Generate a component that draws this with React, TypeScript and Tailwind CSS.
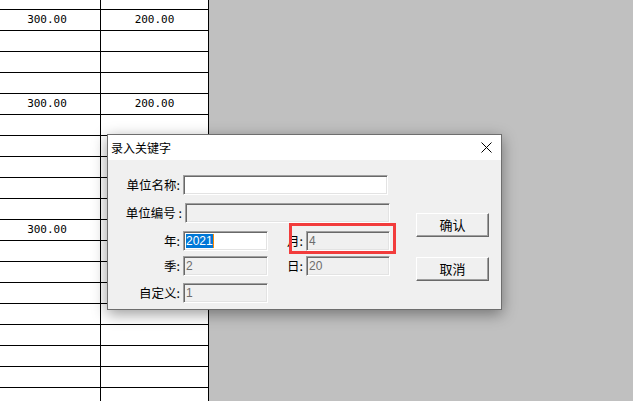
import type { ReactNode } from 'react'

const cjk = "font-['Noto_Sans_CJK_SC','Microsoft_YaHei',sans-serif]"

const rows: [string, string][] = Array.from({ length: 19 }, (_, i) => {
  if (i === 0 || i === 4) return ['300.00', '200.00']
  if (i === 10) return ['300.00', '']
  return ['', '']
})

function Field({
  value,
  width,
  disabled,
  selected,
}: {
  value: string
  width: string
  disabled?: boolean
  selected?: boolean
}) {
  return (
    <div
      className={`${width} h-[20px] flex items-center pl-[2px] border border-t-[#a0a0a0] border-l-[#a0a0a0] border-b-white border-r-white shadow-[inset_1px_1px_0_#696969,inset_-1px_-1px_0_#e3e3e3] font-['Liberation_Sans',sans-serif] text-[12px] ${
        disabled ? 'bg-[#f0f0f0] text-[#6d6d6d]' : 'bg-white text-black'
      }`}
    >
      {selected ? (
        <>
          <span className="bg-[#0078d7] text-white leading-[14px]">{value}</span>
          <span className="w-[1px] h-[14px] bg-[#ff8a00]" />
        </>
      ) : (
        <span className="leading-[14px]">{value}</span>
      )}
    </div>
  )
}

function Label({ children, width }: { children: ReactNode; width: string }) {
  return <div className={`${width} text-right pr-[3px] ${cjk} text-[12.5px] leading-none text-black`}>{children}</div>
}

function Button({ children }: { children: ReactNode }) {
  return (
    <div
      className={`w-[73px] h-[24px] flex items-center justify-center bg-[#f0f0f0] border border-t-white border-l-white border-b-[#696969] border-r-[#696969] shadow-[inset_-1px_-1px_0_#a0a0a0] ${cjk} text-[13px] text-black`}
    >
      {children}
    </div>
  )
}

export default function App() {
  return (
    <div className="relative w-[633px] h-[401px] overflow-hidden bg-[#c0c0c0] flex">
      {/* sheet */}
      <div className="w-[209px] h-full bg-white flex flex-col font-['DejaVu_Sans_Mono',monospace] text-[11px] text-black">
        <div className="h-[10px] shrink-0 flex border-b border-black">
          <div className="w-[101px] border-r border-black" />
          <div className="w-[108px] border-r border-black" />
        </div>
        {rows.map(([a, b], i) => (
          <div key={i} className="h-[21px] shrink-0 flex border-b border-black">
            <div className="w-[101px] border-r border-black flex items-center justify-center pr-[6px]">{a}</div>
            <div className="w-[108px] border-r border-black flex items-center justify-center">{b}</div>
          </div>
        ))}
      </div>

      {/* dialog */}
      <div className="absolute left-[107px] top-[134px] w-[395px] h-[176px] bg-[#f0f0f0] border border-[#6e6e6e] shadow-[0_4px_14px_rgba(0,0,0,0.4)] flex flex-col">
        <div className="h-[25px] bg-white flex items-center justify-between pl-[3px] pr-[9px]">
          <span className={`${cjk} text-[12px] text-black`}>录入关键字</span>
          <svg width="11" height="11" viewBox="0 0 11 11">
            <path d="M0.5 0.5 L10.5 10.5 M10.5 0.5 L0.5 10.5" stroke="#000" strokeWidth="1" />
          </svg>
        </div>
        <div className="flex pt-[15px]">
          <div className="w-[282px] flex flex-col">
            <div className="flex items-center">
              <Label width="w-[75px]">单位名称:</Label>
              <Field value="" width="w-[205px]" />
            </div>
            <div className="flex items-center mt-[8px]">
              <Label width="w-[77px]">单位编号 :</Label>
              <Field value="" width="w-[205px]" disabled />
            </div>
            <div className="flex items-center mt-[8px]">
              <Label width="w-[75px]">年:</Label>
              <Field value="2021" width="w-[85px]" selected />
              <Label width="w-[38px]">月:</Label>
              <Field value="4" width="w-[84px]" disabled />
            </div>
            <div className="flex items-center mt-[5px]">
              <Label width="w-[75px]">季:</Label>
              <Field value="2" width="w-[85px]" disabled />
              <Label width="w-[38px]">日:</Label>
              <Field value="20" width="w-[84px]" disabled />
            </div>
            <div className="flex items-center mt-[7px]">
              <Label width="w-[75px]">自定义:</Label>
              <Field value="1" width="w-[85px]" disabled />
            </div>
          </div>
          <div className="ml-[26px] mt-[38px] flex flex-col gap-[20px]">
            <Button>确认</Button>
            <Button>取消</Button>
          </div>
        </div>
      </div>

      {/* annotation */}
      <div className="absolute left-[289px] top-[223px] w-[107px] h-[31px] border-[3px] border-[#f23c3c]" />
    </div>
  )
}
